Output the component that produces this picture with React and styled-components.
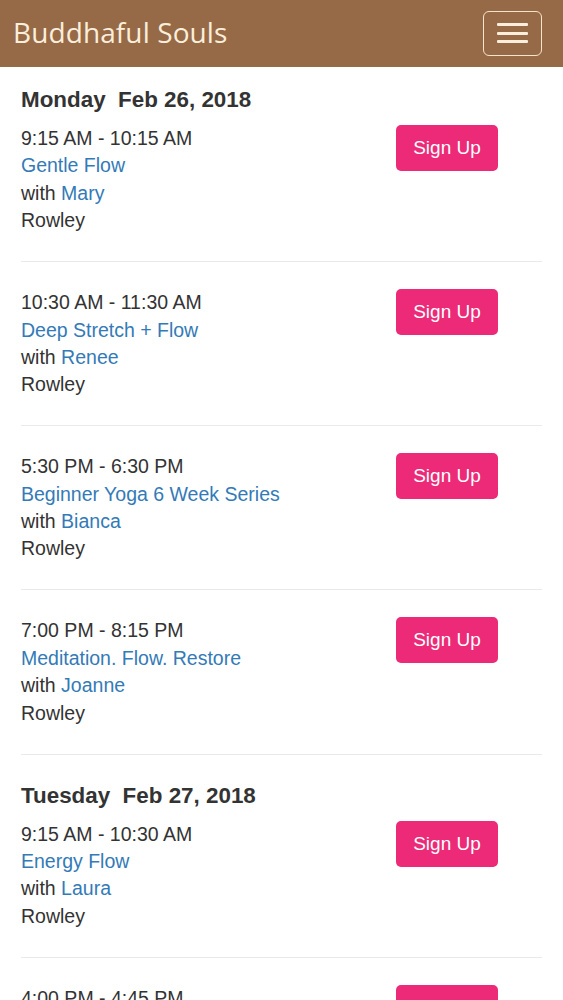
import styled, { createGlobalStyle } from "styled-components";

const GlobalStyle = createGlobalStyle`
  html, body {
    margin: 0;
    padding: 0;
    background: #fff;
  }
  body {
    font-family: "Liberation Sans", Arial, sans-serif;
    color: #333;
  }
`;

const Header = styled.header`
  height: 67px;
  background: #966a46;
  display: flex;
  align-items: center;
  justify-content: space-between;
  padding: 0 21px 0 13px;
  box-sizing: border-box;
`;

const Brand = styled.a`
  font-family: "Open Sans", sans-serif;
  font-size: 28px;
  color: #fbeedc;
  letter-spacing: 0.1px;
  text-decoration: none;
  margin-top: -4px;
`;

const MenuButton = styled.button`
  width: 59px;
  height: 45px;
  margin-top: -1px;
  background: transparent;
  border: 1.5px solid #f6e3cc;
  border-radius: 6px;
  display: flex;
  flex-direction: column;
  align-items: center;
  justify-content: center;
  gap: 5.5px;
  padding: 0;
`;

const Bar = styled.span`
  display: block;
  width: 31px;
  height: 3px;
  background: #fbeedc;
  border-radius: 1px;
`;

const Content = styled.main`
  padding: 18px 21px 0;
`;

const Day = styled.section``;

const DayHeading = styled.h2`
  margin: ${(p) => (p.$first ? "0" : "26px")} 0 10px;
  font-size: 22.4px;
  line-height: 30px;
  font-weight: bold;
  color: #333;
  white-space: pre;
`;

const Row = styled.div`
  display: flex;
  padding: ${(p) => (p.$first ? "0" : "27px")} 0 26.5px;
  border-bottom: 1px solid #eaeaea;
`;

const Info = styled.div`
  flex: 1;
  font-size: 19.5px;
  line-height: 27.4px;
`;

const Line = styled.div``;

const Link = styled.a`
  color: #337ab7;
  text-decoration: none;
`;

const Action = styled.div`
  width: 146px;
`;

const SignUp = styled.button`
  width: 102px;
  height: 46px;
  background: #ec2a78;
  color: #fff;
  border: none;
  border-radius: 5px;
  font-family: "Liberation Sans", Arial, sans-serif;
  font-size: 19px;
  padding: 0;
`;

const days = [
  {
    label: "Monday  Feb 26, 2018",
    classes: [
      { time: "9:15 AM - 10:15 AM", name: "Gentle Flow", teacher: "Mary" },
      { time: "10:30 AM - 11:30 AM", name: "Deep Stretch + Flow", teacher: "Renee" },
      { time: "5:30 PM - 6:30 PM", name: "Beginner Yoga 6 Week Series", teacher: "Bianca" },
      { time: "7:00 PM - 8:15 PM", name: "Meditation. Flow. Restore", teacher: "Joanne" },
    ],
  },
  {
    label: "Tuesday  Feb 27, 2018",
    classes: [
      { time: "9:15 AM - 10:30 AM", name: "Energy Flow", teacher: "Laura" },
      { time: "4:00 PM - 4:45 PM", name: "Kids Yoga", teacher: "Mary" },
    ],
  },
];

export default function App() {
  return (
    <>
      <GlobalStyle />
      <Header>
        <Brand href="#">Buddhaful Souls</Brand>
        <MenuButton aria-label="Toggle navigation">
          <Bar />
          <Bar />
          <Bar />
        </MenuButton>
      </Header>
      <Content>
        {days.map((day, d) => (
          <Day key={day.label}>
            <DayHeading $first={d === 0}>{day.label}</DayHeading>
            {day.classes.map((c, i) => (
              <Row key={c.time} $first={i === 0}>
                <Info>
                  <Line>{c.time}</Line>
                  <Line>
                    <Link href="#">{c.name}</Link>
                  </Line>
                  <Line>
                    with <Link href="#">{c.teacher}</Link>
                  </Line>
                  <Line>Rowley</Line>
                </Info>
                <Action>
                  <SignUp>Sign Up</SignUp>
                </Action>
              </Row>
            ))}
          </Day>
        ))}
      </Content>
    </>
  );
}
